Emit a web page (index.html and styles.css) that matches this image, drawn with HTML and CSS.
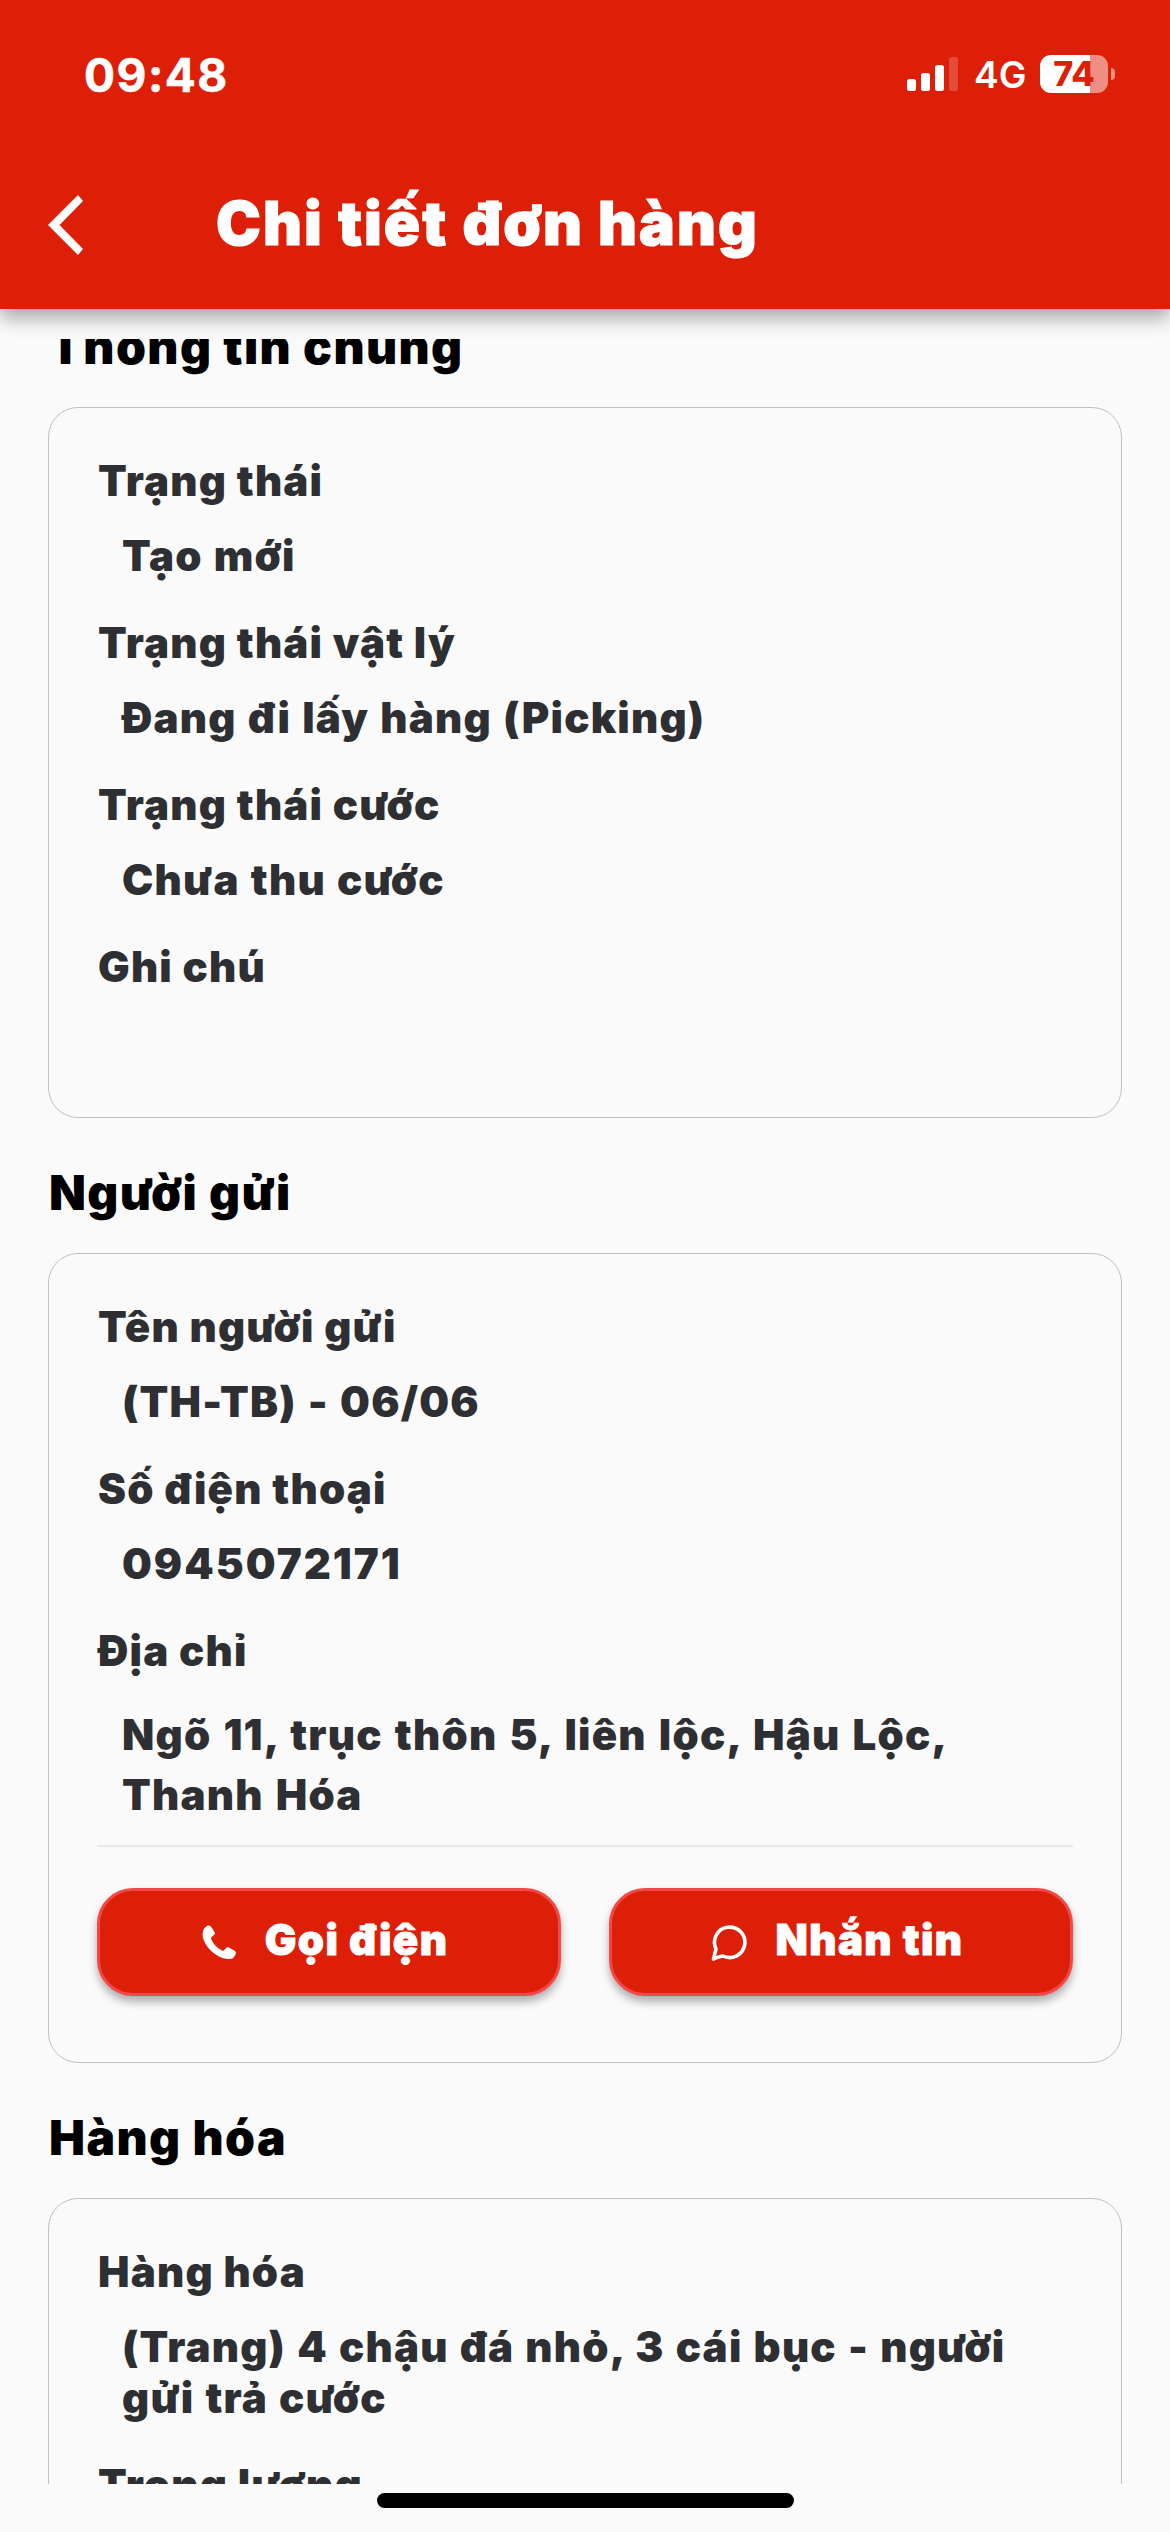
FILE: index.html
```html
<!DOCTYPE html>
<html lang="vi">
<head>
    <meta charset="UTF-8">
    <meta name="viewport" content="width=device-width, initial-scale=1.0">
    <title>Chi tiết đơn hàng</title>
    <link rel="stylesheet" href="styles.css">
</head>
<body>
    <header class="header">
        <div class="status-bar">
            <span class="time">09:48</span>
            <div class="status-icons">
                <svg class="signal" width="52" height="34" viewBox="0 0 52 34" fill="#fff">
                    <rect x="0" y="22" width="9" height="12" rx="2.5"/>
                    <rect x="14" y="16" width="9" height="18" rx="2.5"/>
                    <rect x="28" y="8" width="9" height="26" rx="2.5"/>
                    <rect x="42" y="0" width="9" height="34" rx="2.5" opacity="0.2"/>
                </svg>
                <span class="network">4G</span>
                <div class="battery"><span>74</span></div>
            </div>
        </div>
        <div class="title-bar">
            <button class="back" aria-label="Quay lại">
                <svg width="36" height="60" viewBox="0 0 36 60" fill="#fff">
                    <path d="M30 0L35 6L11.500 30L35 54L30 60L0 30Z"/>
                </svg>
            </button>
            <h1>Chi tiết đơn hàng</h1>
        </div>
    </header>

    <main class="content">
        <h2>Thông tin chung</h2>
        <section class="card">
            <div class="field">
                <div class="label">Trạng thái</div>
                <div class="value">Tạo mới</div>
            </div>
            <div class="field">
                <div class="label">Trạng thái vật lý</div>
                <div class="value">Đang đi lấy hàng (Picking)</div>
            </div>
            <div class="field">
                <div class="label">Trạng thái cước</div>
                <div class="value">Chưa thu cước</div>
            </div>
            <div class="field">
                <div class="label">Ghi chú</div>
                <div class="value"></div>
            </div>
        </section>

        <h2>Người gửi</h2>
        <section class="card sender">
            <div class="field">
                <div class="label">Tên người gửi</div>
                <div class="value">(TH-TB) - 06/06</div>
            </div>
            <div class="field">
                <div class="label">Số điện thoại</div>
                <div class="value phone">0945072171</div>
            </div>
            <div class="field">
                <div class="label">Địa chỉ</div>
                <div class="value address">Ngõ 11, trục thôn 5, liên lộc, Hậu Lộc,<br>Thanh Hóa</div>
            </div>
            <div class="actions">
                <button class="btn">
                    <svg width="35" height="35" viewBox="0 0 35 35" fill="#fff">
                        <path d="M5 1C7 0 9 1 10 3L13 8C13 10 10 11 9 13C10 18 16 24 21 26C23 25 24 22 26 22L33 26C35 28 33 31 31 33C28 35 21 34 16 31C9 27 3 20 1 13C0 8 1 3 5 1Z"/>
                    </svg>
                    <span>Gọi điện</span>
                </button>
                <button class="btn">
                    <svg width="37" height="37" viewBox="0 0 37 37" fill="none" stroke="#fff" stroke-width="3.600" stroke-linejoin="round">
                        <path d="M2.500 35L5 25A15.200 15.200 0 1 1 12 32Q10 32 2.500 35Z"/>
                    </svg>
                    <span>Nhắn tin</span>
                </button>
            </div>
        </section>

        <h2>Hàng hóa</h2>
        <section class="card">
            <div class="field">
                <div class="label">Hàng hóa</div>
                <div class="value">(Trang) 4 chậu đá nhỏ, 3 cái bục - người<br>gửi trả cước</div>
            </div>
            <div class="field">
                <div class="label">Trọng lượng</div>
                <div class="value"></div>
            </div>
        </section>
    </main>

    <div class="home-area">
        <div class="home-indicator"></div>
    </div>
</body>
</html>
```
FILE: styles.css
```css
* {
    margin: 0;
    padding: 0;
    box-sizing: border-box;
    font-family: 'Inter', 'Noto Sans', sans-serif;
}

body {
    display: flex;
    flex-direction: column;
    width: 1170px;
    height: 2532px;
    overflow: hidden;
    background: #fafafa;
    color: #2e2f33;
}

button {
    border: none;
    background: none;
    color: #fff;
}

svg {
    display: block;
    flex-shrink: 0;
}

/* Header */
.header {
    height: 309px;
    flex-shrink: 0;
    background: #de1f08;
    color: #fff;
    box-shadow: 0 9px 18px rgba(0, 0, 0, 0.34);
}

.status-bar {
    display: flex;
    justify-content: space-between;
    height: 141px;
    padding: 47px 62px 0 84px;
}

.time {
    font-size: 46px;
    line-height: 56px;
    font-weight: 700;
    letter-spacing: 1.5px;
    -webkit-text-stroke: 0.5px #fff;
}

.status-icons {
    display: flex;
    align-items: center;
    height: 54px;
}

.network {
    margin-left: 15px;
    width: 66px;
    font-size: 37px;
    font-weight: 600;
}

.battery {
    position: relative;
    width: 68px;
    height: 38px;
    border-radius: 11px;
    background: linear-gradient(to right, #fff 50px, #ef8f83 50px);
    color: #de1f08;
    font-size: 34px;
    line-height: 38px;
    font-weight: 800;
    text-align: center;
}

.battery::after {
    content: '';
    position: absolute;
    right: -7px;
    top: 13px;
    width: 4px;
    height: 12px;
    border-radius: 0 4px 4px 0;
    background: #ef8f83;
}

.title-bar {
    display: flex;
    align-items: center;
    height: 168px;
    padding-left: 48px;
}

.back {
    width: 168px;
}

.title-bar h1 {
    padding-bottom: 3px;
    font-size: 60px;
    line-height: 73px;
    font-weight: 900;
    letter-spacing: 2.1px;
    -webkit-text-stroke: 1.2px #fff;
}

/* Scrolled content */
.content {
    height: 2145px;
    margin-top: 30px;
    padding: 0 48px;
    overflow: hidden;
}

.content h2 {
    margin: 46px 0 31px;
    padding-left: 1px;
    color: #000;
    font-size: 48px;
    line-height: 58px;
    font-weight: 900;
    letter-spacing: 1.4px;
}

.content h2:first-child {
    margin-top: -21px;
}

.card {
    padding: 47px 48px 50px;
    border: 1px solid #c0c0c0;
    border-radius: 30px;
}

.field + .field {
    margin-top: 36px;
}

.label,
.value {
    min-height: 51px;
    padding-left: 1px;
    font-size: 42px;
    line-height: 51px;
    font-weight: 900;
    letter-spacing: 1.2px;
    white-space: nowrap;
}

.value {
    margin-top: 24px;
    padding-left: 25px;
    word-spacing: 1.5px;
}

.value.phone {
    letter-spacing: 2px;
}

.value.address {
    margin-top: 29px;
    line-height: 60px;
    word-spacing: 2.5px;
}

.sender {
    padding-bottom: 66px;
}

.actions {
    display: flex;
    gap: 48px;
    margin-top: 20px;
    padding-top: 41px;
    border-top: 2px solid #e8e8e8;
}

.btn {
    display: flex;
    flex: 1;
    align-items: center;
    justify-content: center;
    gap: 28px;
    height: 108px;
    padding-right: 8px;
    border: 3px solid #f34848;
    border-radius: 36px;
    background: #de1f08;
    box-shadow: 0 6px 9px rgba(0, 0, 0, 0.3);
    font-size: 42px;
    font-weight: 900;
    letter-spacing: 1.4px;
}

.btn span {
    padding-bottom: 5px;
    -webkit-text-stroke: 0.9px #fff;
}

/* Home indicator */
.home-area {
    display: flex;
    justify-content: center;
    padding-top: 9px;
}

.home-indicator {
    width: 417px;
    height: 15px;
    border-radius: 8px;
    background: #000;
}
```
